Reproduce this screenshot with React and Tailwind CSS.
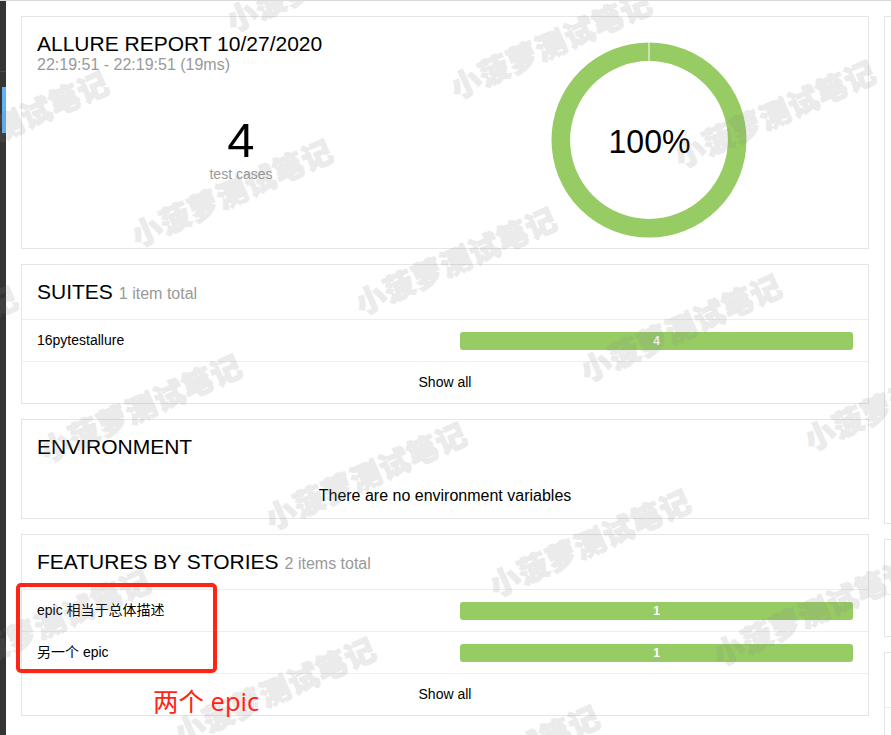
import React from 'react';

const MARKS = [
  [238, 18], [462, 85], [686, 154],
  [-81, 165], [143, 233], [367, 301], [592, 368], [816, 437],
  [-172, 380], [52, 448], [277, 516], [501, 583], [725, 652],
  [-39, 663], [186, 731], [410, 799],
];

function Watermark() {
  return (
    <div className="pointer-events-none absolute inset-0 overflow-hidden opacity-[0.15]">
      {MARKS.map(([x, y]) => (
        <span
          key={`${x},${y}`}
          className="absolute -mt-[21px] -ml-[12px] h-8 origin-[16px_16px] -rotate-24 whitespace-nowrap font-['Noto_Sans_CJK_SC',sans-serif] text-[30px] leading-8 font-black tracking-[1px] text-[#808080] [-webkit-text-stroke:1.4px_#808080]"
          style={{ left: x, top: y }}
        >
          小菠萝测试笔记
        </span>
      ))}
    </div>
  );
}

function Card({ className = '', children }) {
  return <section className={`flex shrink-0 flex-col border border-[#e5e5e5] ${className}`}>{children}</section>;
}

function Heading({ title, note }) {
  return (
    <h2 className="h-[54px] shrink-0 px-[15px] pt-[15px] text-[21px] leading-6">
      {title}
      {note && <small className="ml-1.5 text-base leading-6 text-[#999]">{note}</small>}
    </h2>
  );
}

function Row({ name, count }) {
  return (
    <div className="flex h-[42px] items-center border-t border-[#eceeef] px-[15px] pb-0.5 text-sm">
      <div className="flex-1">{name}</div>
      <div className="mt-[2px] h-[18px] w-[393px] rounded-[3px] bg-[#97cc64] text-center text-xs leading-[18px] font-bold text-white">
        {count}
      </div>
    </div>
  );
}

function ShowAll() {
  return (
    <a className="flex h-[42px] items-center justify-center border-t border-[#eceeef] pb-0.5 text-sm">Show all</a>
  );
}

export default function App() {
  return (
    <div className="relative flex h-[735px] w-[891px] flex-col overflow-hidden border-t border-[#d9d9de] bg-white font-['Liberation_Sans','Noto_Sans_CJK_SC',sans-serif] text-black">
      <div className="flex min-h-0 flex-1">
        <aside className="flex w-1.5 shrink-0 flex-col bg-[#343434]">
          <div className="h-[71px] border-b border-[#4a4a4a]" />
          <div className="mt-[15px] ml-0.5 h-[46px] bg-[#63b1f4]" />
        </aside>

        <main className="ml-[15px] flex w-[848px] shrink-0 flex-col gap-[15px] pt-[15px]">
          <Card className="h-[233px]">
            <div className="flex flex-1">
              <div className="w-1/2 pt-[15px] pl-[15px]">
                <h2 className="text-[21px] leading-6">ALLURE REPORT 10/27/2020</h2>
                <div className="text-base leading-[18px] text-[#999]">22:19:51 - 22:19:51 (19ms)</div>
                <div className="mt-[38px] flex flex-col items-center">
                  <div className="h-[54px] text-[49px] leading-[56px]">4</div>
                  <div className="text-sm leading-4 text-[#999]">test cases</div>
                </div>
              </div>
              <svg className="mt-[25px] ml-[106px] h-[196px] w-[196px]" viewBox="0 0 196 196">
                <circle cx="98" cy="98" r="88.2" fill="none" stroke="#97cc64" strokeWidth="18.6" />
                <path d="M98 0V19" stroke="#fff" strokeOpacity="0.6" strokeWidth="1.6" />
                <text x="98.5" y="110.5" textAnchor="middle" fontSize="33" textLength="82" lengthAdjust="spacingAndGlyphs">100%</text>
              </svg>
            </div>
          </Card>

          <Card className="h-[140px]">
            <Heading title="SUITES" note="1 item total" />
            <Row name="16pytestallure" count="4" />
            <ShowAll />
          </Card>

          <Card className="h-[100px]">
            <Heading title="ENVIRONMENT" />
            <div className="pt-3 text-center text-base leading-5">There are no environment variables</div>
          </Card>

          <Card className="h-[182px]">
            <Heading title="FEATURES BY STORIES" note="2 items total" />
            <Row name="epic 相当于总体描述" count="1" />
            <Row name="另一个 epic" count="1" />
            <ShowAll />
          </Card>
        </main>

        <div className="ml-[15px] flex w-[100px] shrink-0 flex-col gap-[15px] pt-[15px]">
          <Card className="h-[508px]" />
          <Card className="h-[98px]">
            <div className="h-[55px] shrink-0 border-b border-[#eceeef]" />
          </Card>
          <Card className="h-[140px]">
            <div className="h-[55px] shrink-0 border-b border-[#eceeef]" />
          </Card>
        </div>
      </div>

      <Watermark />

      <div className="absolute top-[582px] left-4 h-[90px] w-[201px] rounded-[5px] border-4 border-[#ff2415]" />
      <div className="absolute top-[682px] left-[153px] font-['Open_Sans','Noto_Sans_CJK_SC',sans-serif] text-[25.5px] leading-9 text-[#ff2415]">
        两个 epic
      </div>
    </div>
  );
}
